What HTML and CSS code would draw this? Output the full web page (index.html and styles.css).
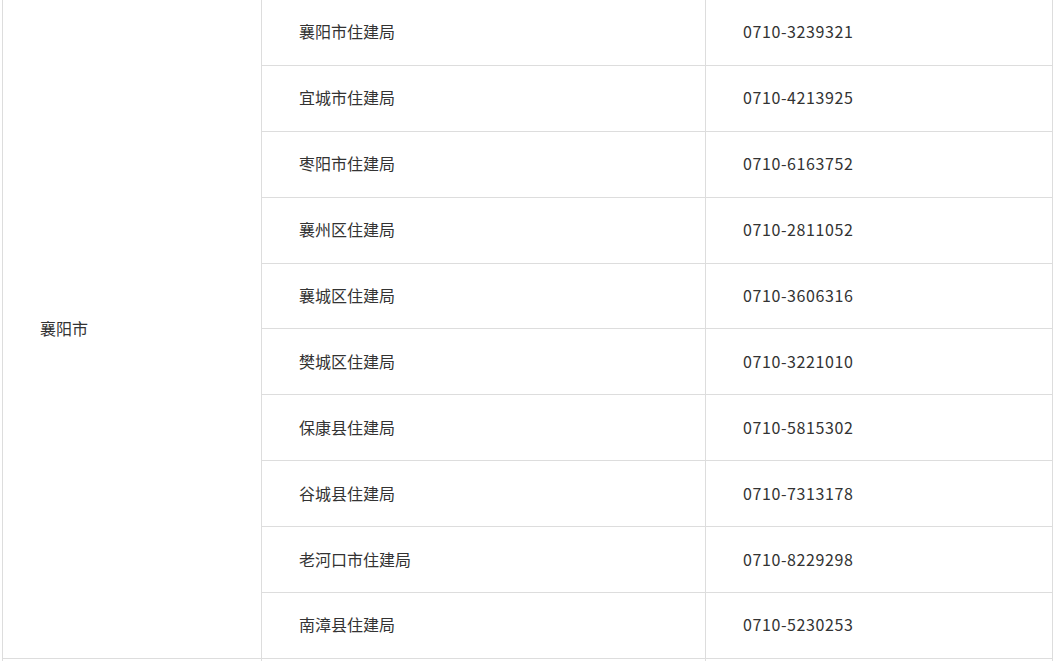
FILE: index.html
```html
<!DOCTYPE html>
<html lang="zh-CN">
<head>
<meta charset="utf-8">
<link rel="stylesheet" href="styles.css">
</head>
<body>
<div class="wrap">
<table class="tbl">
<colgroup><col class="c1"><col class="c2"><col class="c3"></colgroup>
<tbody>
<tr><td class="city" rowspan="11">襄阳市</td><td>襄阳市住建局</td><td class="tel">0710-3239321</td></tr>
<tr><td>宜城市住建局</td><td class="tel">0710-4213925</td></tr>
<tr><td>枣阳市住建局</td><td class="tel">0710-6163752</td></tr>
<tr><td>襄州区住建局</td><td class="tel">0710-2811052</td></tr>
<tr><td>襄城区住建局</td><td class="tel">0710-3606316</td></tr>
<tr><td>樊城区住建局</td><td class="tel">0710-3221010</td></tr>
<tr><td>保康县住建局</td><td class="tel">0710-5815302</td></tr>
<tr><td>谷城县住建局</td><td class="tel">0710-7313178</td></tr>
<tr><td>老河口市住建局</td><td class="tel">0710-8229298</td></tr>
<tr><td>南漳县住建局</td><td class="tel">0710-5230253</td></tr>
</tbody>
</table>
<table class="tbl next">
<colgroup><col class="c1"><col class="c2"><col class="c3"></colgroup>
<tbody>
<tr><td></td><td></td><td></td></tr>
</tbody>
</table>
</div>
</body>
</html>
```
FILE: styles.css
```css
html, body {
  margin: 0;
  padding: 0;
  background: #fff;
  overflow: hidden;
}
.wrap {
  padding-left: 2px;
  margin-top: -1px;
}
.tbl {
  border-collapse: collapse;
  width: 1050px;
  table-layout: fixed;
  font-family: "Microsoft YaHei", "Noto Sans CJK SC", sans-serif;
  font-size: 16px;
  color: #333;
}
.c1 { width: 259px; }
.c2 { width: 444px; }
.c3 { width: 347px; }
.tbl td {
  border: 1px solid #dddddd;
  height: 65.9px;
  padding: 0 0 2px 37px;
  box-sizing: border-box;
  vertical-align: middle;
  line-height: 20px;
}
.tbl td.tel {
  letter-spacing: 0.6px;
}
.next {
  margin-top: -1px;
}
.next td {
  border-bottom: none;
}
```
